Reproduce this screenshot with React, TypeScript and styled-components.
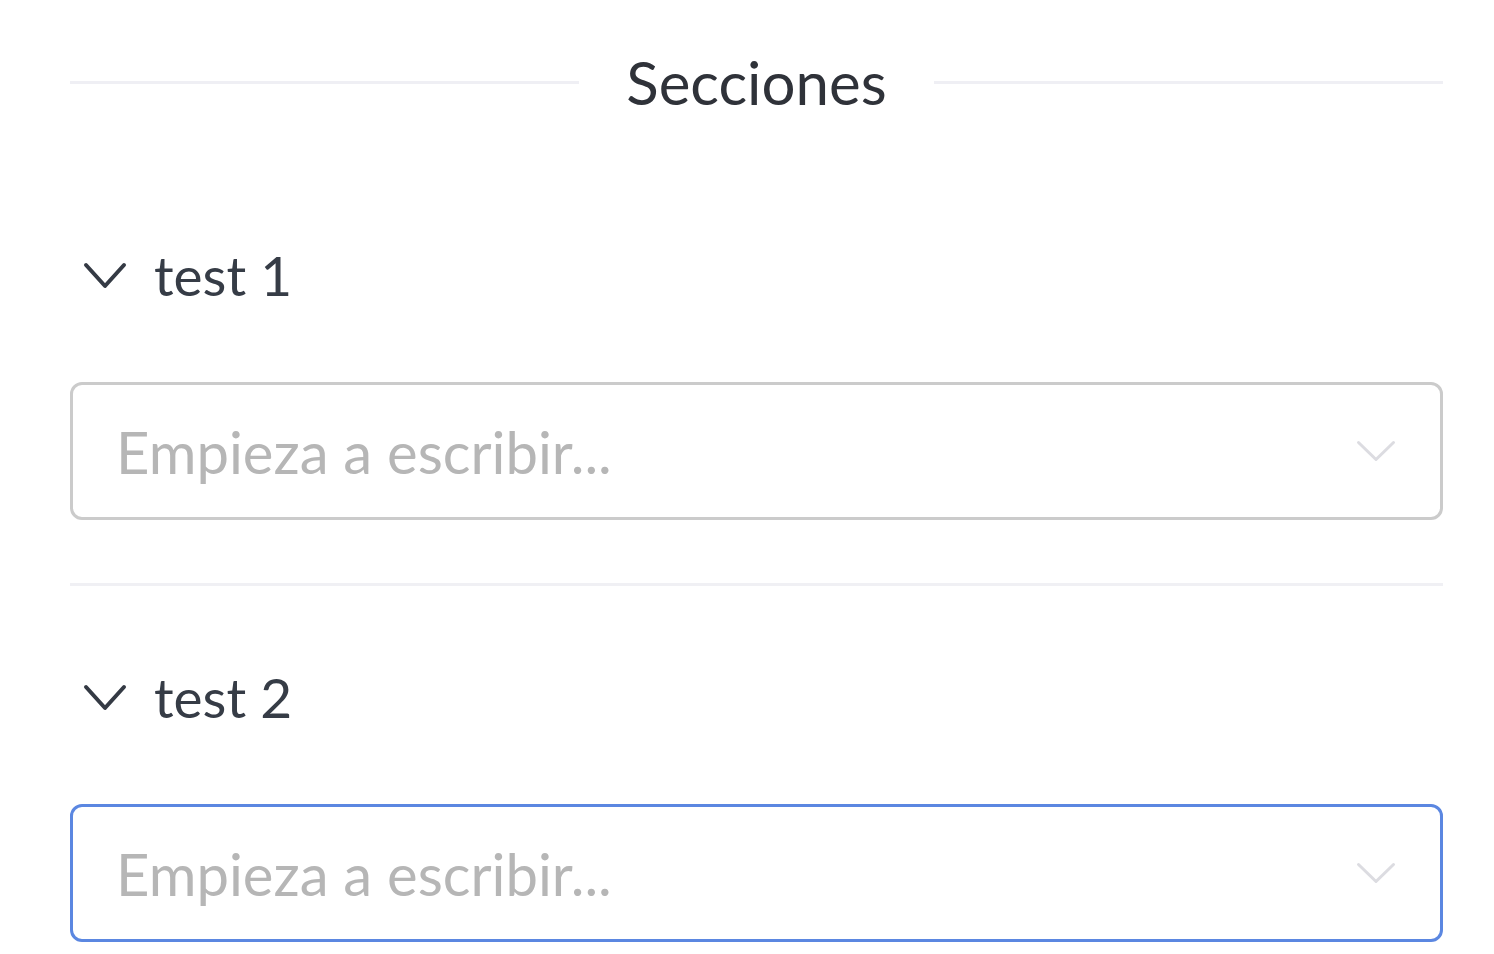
import React from "react";
import styled, { createGlobalStyle } from "styled-components";

const Global = createGlobalStyle`
  html, body { margin: 0; padding: 0; background: #ffffff; }
  body { font-family: Lato, "Open Sans", sans-serif; }
`;

const Page = styled.div`
  width: 1373px;
  padding: 0 51px 0 70px;
  display: flex;
  flex-direction: column;
`;

const Header = styled.div`
  height: 164px;
  display: flex;
  align-items: center;
  gap: 47px;
`;

const Rule = styled.div`
  flex: 1;
  height: 3px;
  background: #efeff4;
`;

const Title = styled.h1`
  margin: 0;
  font-family: Lato, sans-serif;
  font-weight: 400;
  font-size: 60px;
  line-height: 1;
  color: #2f3239;
`;

const Section = styled.section`
  display: flex;
  flex-direction: column;
  padding-top: 71px;
`;

const LabelRow = styled.div`
  height: 80px;
  display: flex;
  align-items: center;
  gap: 27px;
  padding-left: 13px;
  margin-bottom: 67px;
`;

const Label = styled.span`
  font-family: Lato, sans-serif;
  font-size: 55px;
  line-height: 1;
  color: #363c46;
`;

const Field = styled.div<{ $focused?: boolean }>`
  height: 138px;
  box-sizing: border-box;
  border: 3px solid ${(p) => (p.$focused ? "#5b87e1" : "#cbcbcb")};
  border-radius: 12px;
  display: flex;
  align-items: center;
  padding: 0 44px 0 43px;
  background: #fff;
`;

const Input = styled.input`
  flex: 1;
  border: none;
  outline: none;
  background: transparent;
  font-family: Lato, sans-serif;
  font-size: 58px;
  color: #333;
  padding: 0;
  &::placeholder { color: #b6b6b6; }
`;

const Divider = styled.div`
  height: 3px;
  background: #f0f0f4;
  margin-top: 63px;
`;

const Chevron = ({ w, h, color, sw }: { w: number; h: number; color: string; sw: number }) => (
  <svg width={w} height={h} viewBox={`0 0 ${w} ${h}`} fill="none">
    <polyline
      points={`${sw / 2 + 1},${sw / 2 + 1} ${w / 2},${h - sw / 2 - 1} ${w - sw / 2 - 1},${sw / 2 + 1}`}
      stroke={color}
      strokeWidth={sw}
      strokeLinecap="round"
      strokeLinejoin="round"
    />
  </svg>
);

const Block = ({ title, focused }: { title: string; focused?: boolean }) => (
  <Section>
    <LabelRow>
      <Chevron w={44} h={27} color="#343a44" sw={4} />
      <Label>{title}</Label>
    </LabelRow>
    <Field $focused={focused}>
      <Input placeholder="Empieza a escribir..." />
      <Chevron w={40} h={22} color="#dcdce1" sw={3} />
    </Field>
  </Section>
);

export default function App() {
  return (
    <>
      <Global />
      <Page>
        <Header>
          <Rule />
          <Title>Secciones</Title>
          <Rule />
        </Header>
        <Block title="test 1" />
        <Divider />
        <Block title="test 2" focused />
      </Page>
    </>
  );
}
